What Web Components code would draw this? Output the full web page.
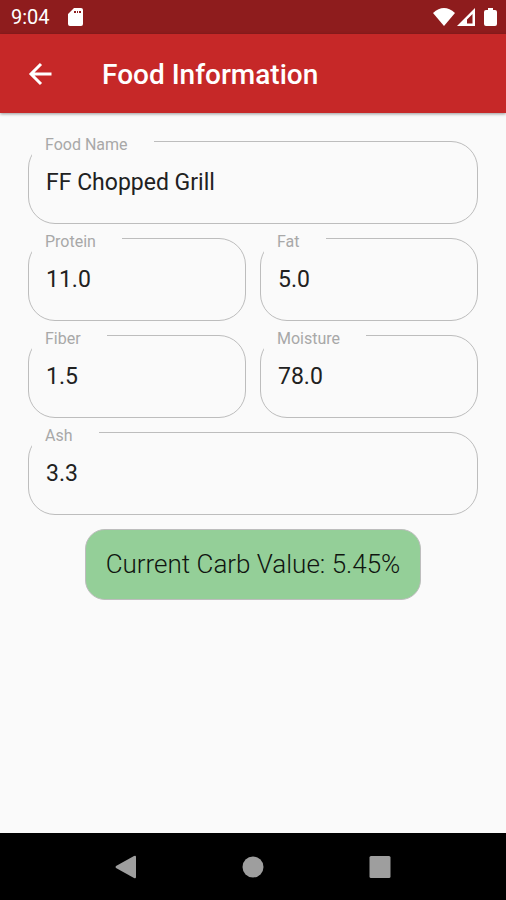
<!DOCTYPE html>
<html lang="en">
<head>
<meta charset="utf-8">
<meta name="viewport" content="width=device-width, initial-scale=1">
<title>Food Information</title>
<style>
  html, body { margin: 0; height: 100%; background: #fafafa; }
  body { font-family: Roboto, "Liberation Sans", sans-serif; --surface: #fafafa; --outline: #bdbdbd; }
</style>
</head>
<body>
<food-screen></food-screen>
<script>
  const define = (name, html, setup) => {
    const template = document.createElement('template');
    template.innerHTML = html;
    customElements.define(name, class extends HTMLElement {
      connectedCallback() {
        if (this.shadowRoot) return;
        const root = this.attachShadow({ mode: 'open' });
        root.append(template.content.cloneNode(true));
        if (setup) setup(this, root);
      }
    });
  };

  define('status-bar', `
    <style>
      :host { display: flex; align-items: center; height: 34px; padding: 0 9px 0 11px; background: #8e1c1d; color: #fff; font-size: 20px; line-height: 34px; }
      svg { display: block; fill: #fff; }
      .card { margin-left: 18px; }
      .right { display: flex; align-items: center; gap: 2px; margin-left: auto; }
      .battery { margin-left: 7px; }
    </style>
    <time>9:04</time>
    <svg class="card" width="15" height="18" viewBox="0 0 15 18" aria-hidden="true"><path fill-rule="evenodd" d="M6 0h7q2 0 2 2v14q0 2-2 2H2q-2 0-2-2V6zM6 3v2h2V3zM9 3v2h1V3zM11 3v2h2V3z"/></svg>
    <div class="right">
      <svg width="22" height="20" viewBox="0 0 22 20" aria-hidden="true"><path d="M0 6Q11-4 22 6L11 19z"/></svg>
      <svg width="18" height="20" viewBox="0 0 18 20" aria-hidden="true"><path fill-rule="evenodd" d="M18 1v18H0zM15.500 7v9.500h-5.500v-4z"/></svg>
      <svg class="battery" width="13" height="20" viewBox="0 0 13 20" aria-hidden="true"><path d="M4 1h5v2h2q2 0 2 2v12q0 2-2 2H2q-2 0-2-2V5q0-2 2-2h2z"/></svg>
    </div>`);

  define('app-bar', `
    <style>
      :host { display: flex; align-items: center; gap: 46px; height: 79px; padding: 0 24px; background: #c62828; color: #fff; box-shadow: 0 1px 3px #0006; position: relative; }
      button { display: flex; width: 32px; height: 32px; padding: 0; border: 0; background: none; align-items: center; justify-content: center; }
      h1 { margin: 0; padding-top: 2px; font-size: 28px; line-height: 36px; font-weight: 500; white-space: nowrap; }
    </style>
    <button type="button" aria-label="Back"><svg width="24" height="24" viewBox="0 0 24 24" fill="none" stroke="#fff" stroke-width="3"><path d="M23.500 12H3M13 2L3 12l10 10"/></svg></button>
    <h1><slot></slot></h1>`);

  define('outlined-field', `
    <style>
      :host { display: grid; min-width: 0; }
      label, input { grid-area: 1 / 1; }
      label { z-index: 1; place-self: start; margin: -5px 0 0 4px; padding: 0 26px 5px 13px; background: var(--surface); color: #a8a8a8; font-size: 16px; line-height: 18px; white-space: nowrap; }
      input { box-sizing: border-box; width: 100%; min-width: 0; height: 83px; margin: 0; padding: 0 16px 1px 17px; border: 1px solid var(--outline); border-radius: 27px; background: none; color: #212121; font: inherit; font-size: 23px; }
    </style>
    <label for="field"></label>
    <input id="field" type="text">`,
    (host, root) => {
      root.querySelector('label').textContent = host.getAttribute('label');
      const input = root.querySelector('input');
      input.value = host.getAttribute('value');
      input.setAttribute('value', input.value);
    });

  define('carb-result', `
    <style>
      :host { display: block; box-sizing: border-box; padding: 16px 20px; border: 1px solid var(--outline); border-radius: 20px; background: #94cf98; color: #101510; }
      output { display: block; font-size: 26px; font-weight: 300; line-height: 37px; white-space: nowrap; }
    </style>
    <output><slot></slot></output>`);

  define('system-nav', `
    <style>
      :host { display: block; background: #000; }
      nav { display: flex; justify-content: center; gap: 95px; height: 67px; align-items: center; }
      button { display: grid; place-items: center; width: 32px; height: 32px; padding: 0; border: 0; background: none; }
      svg { display: block; fill: #9e9e9e; }
    </style>
    <nav aria-label="System">
      <button type="button" aria-label="Back"><svg width="24" height="24" viewBox="0 0 24 24"><path d="M20 1q2-1 2 1v20q0 2-2 1L2 13q-1-1 0-2z"/></svg></button>
      <button type="button" aria-label="Home"><svg width="24" height="24" viewBox="0 0 24 24"><circle cx="12" cy="12" r="10.500"/></svg></button>
      <button type="button" aria-label="Overview"><svg width="24" height="24" viewBox="0 0 24 24"><rect x="1.500" y="1" width="21" height="22" rx="1.500"/></svg></button>
    </nav>`);

  define('food-screen', `
    <style>
      :host { display: flex; flex-direction: column; min-height: 100vh; background: var(--surface); }
      main { flex: 1; padding: 28px; }
      form { display: grid; grid-template-columns: 1fr 1fr; gap: 14px; }
      .wide { grid-column: 1 / -1; }
      carb-result { grid-column: 1 / -1; justify-self: center; }
    </style>
    <status-bar></status-bar>
    <app-bar>Food Information</app-bar>
    <main>
      <form>
        <outlined-field class="wide" label="Food Name" value="FF Chopped Grill"></outlined-field>
        <outlined-field label="Protein" value="11.0"></outlined-field>
        <outlined-field label="Fat" value="5.0"></outlined-field>
        <outlined-field label="Fiber" value="1.5"></outlined-field>
        <outlined-field label="Moisture" value="78.0"></outlined-field>
        <outlined-field class="wide" label="Ash" value="3.3"></outlined-field>
        <carb-result>Current Carb Value: 5.45%</carb-result>
      </form>
    </main>
    <system-nav></system-nav>`);
</script>
</body>
</html>
